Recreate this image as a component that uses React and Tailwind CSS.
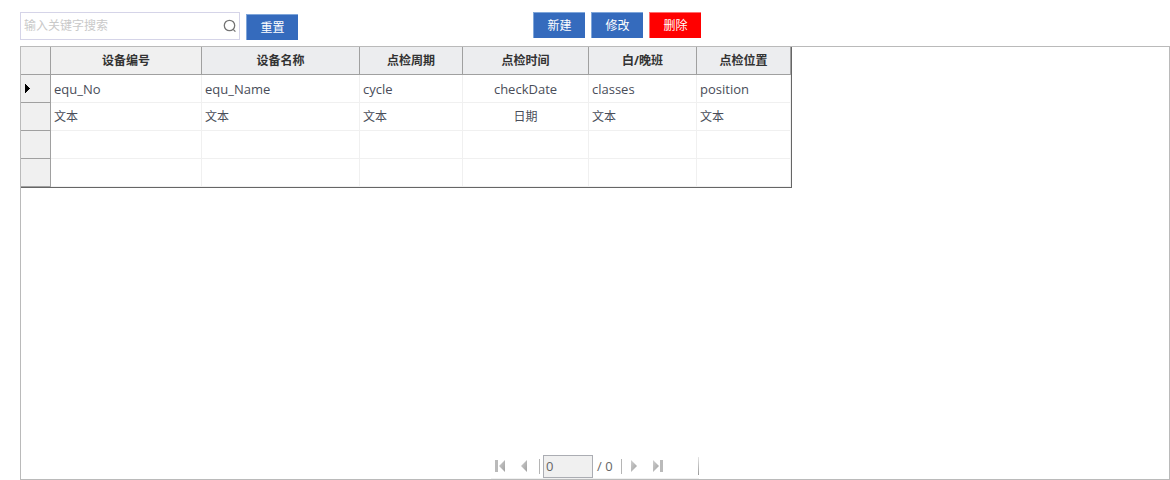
const columns = [
  { title: '设备编号', field: 'equ_No', type: '文本', width: 'w-[151px]', align: 'text-left' },
  { title: '设备名称', field: 'equ_Name', type: '文本', width: 'w-[158px]', align: 'text-left' },
  { title: '点检周期', field: 'cycle', type: '文本', width: 'w-[103px]', align: 'text-left' },
  { title: '点检时间', field: 'checkDate', type: '日期', width: 'w-[126px]', align: 'text-center' },
  { title: '白/晚班', field: 'classes', type: '文本', width: 'w-[108px]', align: 'text-left' },
  { title: '点检位置', field: 'position', type: '文本', width: 'w-[94px]', align: 'text-left' },
];

const rows = ['field', 'type', 'empty1', 'empty2'];

function ToolButton({ danger, children }) {
  const tone = danger
    ? 'bg-[#ff0000] border-[#ff6f6f]'
    : 'bg-[#356bbd] border-[#7fa6da]';
  return (
    <button type="button" className={`h-[26px] w-[52px] shrink-0 border-t border-l text-white ${tone}`}>
      {children}
    </button>
  );
}

function Toolbar() {
  return (
    <div className="flex h-7 shrink-0 items-start">
      <div className="flex h-7 w-[220px] shrink-0 items-center border border-[#d5d4e8] pr-0.5 pl-[3px]">
        <input
          type="text"
          aria-label="关键字"
          placeholder="输入关键字搜索"
          className="min-w-0 flex-1 outline-none placeholder:text-[#c9c9c9]"
        />
        <button type="button" aria-label="搜索">
          <svg width="14" height="14" viewBox="0 0 14 14" fill="none" stroke="#747474" strokeWidth="1.3">
            <circle cx="6.5" cy="6.5" r="5.2" />
            <path d="M10.2 10.4l2.2 2.2" />
          </svg>
        </button>
      </div>
      <div className="ml-1.5 self-end">
        <ToolButton>重置</ToolButton>
      </div>
      <div className="ml-[235px] flex gap-1.5">
        <ToolButton>新建</ToolButton>
        <ToolButton>修改</ToolButton>
        <ToolButton danger>删除</ToolButton>
      </div>
    </div>
  );
}

function DataTable() {
  return (
    <table className="w-[771px] table-fixed border-separate border-spacing-0 border-r border-b border-[#666666]">
      <thead>
        <tr className="h-7">
          <th aria-label="行" className="w-[30px] border-r border-b border-[#a0a0a0] bg-[#f0f0f0] p-0" />
          {columns.map((c, i) => (
            <th
              key={c.field}
              scope="col"
              className={`${c.width} border-r border-b border-[#a0a0a0] p-0 font-bold text-[#333333] ${i === 0 ? 'bg-[#f0f0f0]' : 'bg-[#ecedef]'}`}
            >
              {c.title}
            </th>
          ))}
        </tr>
      </thead>
      <tbody>
        {rows.map((r, i) => (
          <tr key={r} className="h-7">
            <td className="border-r border-b border-[#a0a0a0] bg-[#f0f0f0] p-0 pl-1">
              {i === 0 && (
                <svg width="5" height="9" viewBox="0 0 5 9" className="block" shapeRendering="crispEdges">
                  <path d="M0 0l5 4.5L0 9z" fill="#000" />
                </svg>
              )}
            </td>
            {columns.map((c) => (
              <td
                key={c.field}
                className={`border-r border-b border-[#f0f0f0] px-[3px] py-0 text-[#494d59] ${c.align} ${i === 0 ? 'text-[13px]' : ''}`}
              >
                {c[r]}
              </td>
            ))}
          </tr>
        ))}
      </tbody>
    </table>
  );
}

function PageIcon({ d, label, bar, width }) {
  return (
    <button type="button" aria-label={label}>
      <svg width={width} height="12" viewBox={`0 0 ${width} 12`} className="block">
        <defs>
          <linearGradient id={`shade-${label}`} x1="0" y1="0" x2="1" y2="1">
            <stop offset="0" stopColor="#cfcfcf" />
            <stop offset="1" stopColor="#a0a0a0" />
          </linearGradient>
        </defs>
        <path d={d} fill={`url(#shade-${label})`} />
        {bar !== undefined && <rect x={bar} y="0" width="3" height="12" fill="#bababa" />}
      </svg>
    </button>
  );
}

function Pager() {
  return (
    <nav aria-label="分页" className="mx-auto flex h-6 w-[208px] shrink-0 items-center border-b border-[#f0f0f0] pb-px pl-1 text-[13px] text-[#666666]">
      <PageIcon label="first" width={10} bar={0} d="M10 0v12L4 6z" />
      <div className="ml-4 flex">
        <PageIcon label="previous" width={6} d="M6 0v12L0 6z" />
      </div>
      <span className="ml-3 h-[15px] w-px bg-[#b5b5b5]" />
      <input
        type="text"
        aria-label="页码"
        defaultValue="0"
        className="ml-[3px] h-[23px] w-[50px] border border-[#abadb3] bg-[#f0f0f0] px-0.5 outline-none"
      />
      <span className="ml-1">/ 0</span>
      <span className="ml-2 h-[15px] w-px bg-[#b5b5b5]" />
      <div className="ml-[9px] flex">
        <PageIcon label="next" width={6} d="M0 0v12l6-6z" />
      </div>
      <div className="ml-4 flex">
        <PageIcon label="last" width={10} bar={7} d="M0 0v12l6-6z" />
      </div>
      <span className="ml-auto h-[18px] w-px bg-linear-to-b from-[#e4e4e4] to-[#9a9a9a]" />
    </nav>
  );
}

export default function App() {
  return (
    <main className="flex h-screen flex-col gap-1.5 bg-white pt-3 pl-5 font-['Open_Sans','Noto_Sans_CJK_SC',sans-serif] text-[12px] leading-4">
      <Toolbar />
      <section className="flex min-h-0 flex-1 flex-col justify-between border border-[#bababa] bg-white">
        <DataTable />
        <Pager />
      </section>
    </main>
  );
}
